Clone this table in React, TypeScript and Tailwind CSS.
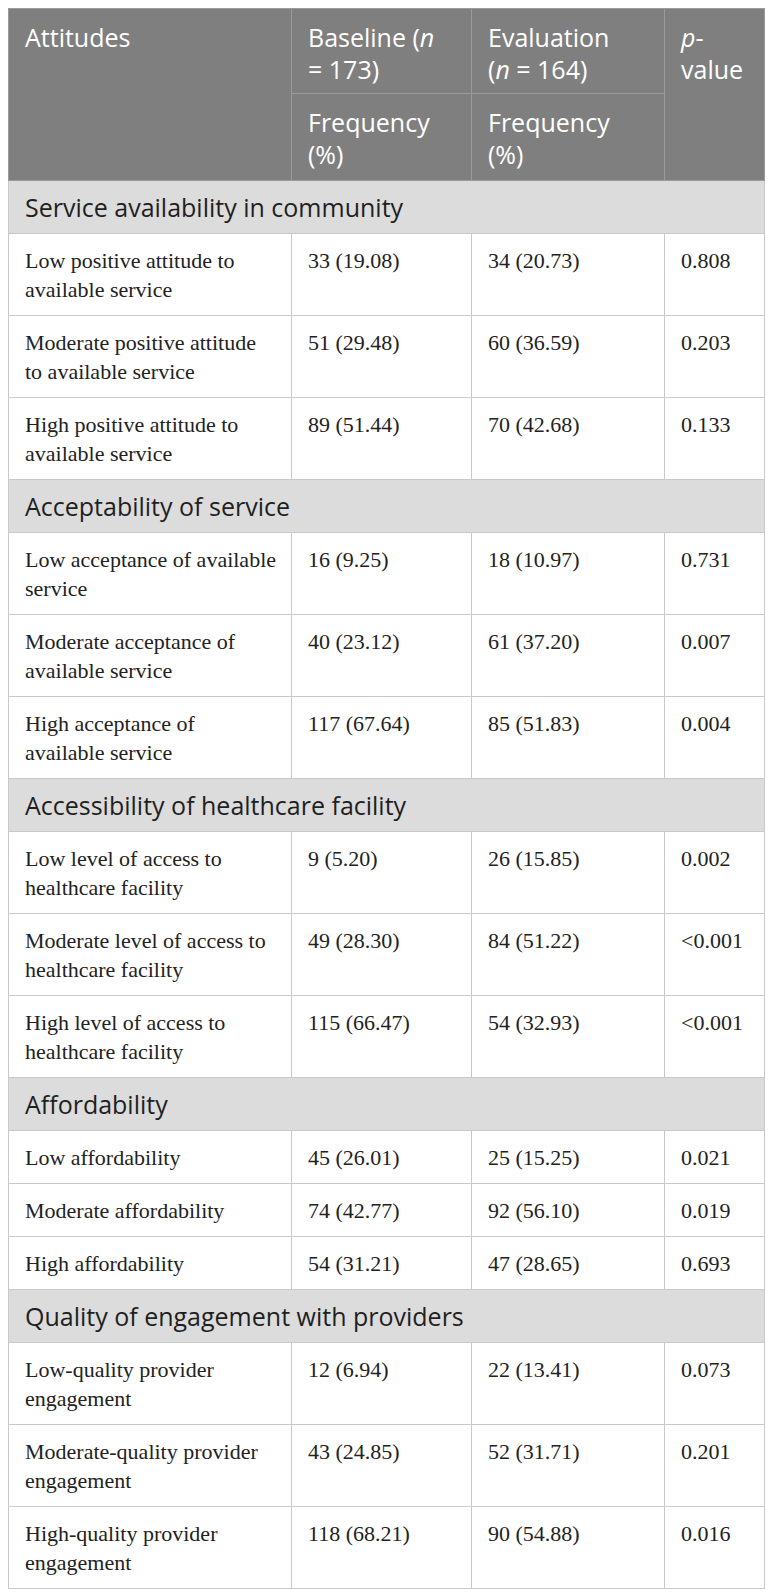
import React from 'react';

type Row = { label: string[]; base: string; evalv: string; p: string };
type Section = { title: string; rows: Row[] };

const sections: Section[] = [
  {
    title: 'Service availability in community',
    rows: [
      { label: ['Low positive attitude to', 'available service'], base: '33 (19.08)', evalv: '34 (20.73)', p: '0.808' },
      { label: ['Moderate positive attitude', 'to available service'], base: '51 (29.48)', evalv: '60 (36.59)', p: '0.203' },
      { label: ['High positive attitude to', 'available service'], base: '89 (51.44)', evalv: '70 (42.68)', p: '0.133' },
    ],
  },
  {
    title: 'Acceptability of service',
    rows: [
      { label: ['Low acceptance of available', 'service'], base: '16 (9.25)', evalv: '18 (10.97)', p: '0.731' },
      { label: ['Moderate acceptance of', 'available service'], base: '40 (23.12)', evalv: '61 (37.20)', p: '0.007' },
      { label: ['High acceptance of', 'available service'], base: '117 (67.64)', evalv: '85 (51.83)', p: '0.004' },
    ],
  },
  {
    title: 'Accessibility of healthcare facility',
    rows: [
      { label: ['Low level of access to', 'healthcare facility'], base: '9 (5.20)', evalv: '26 (15.85)', p: '0.002' },
      { label: ['Moderate level of access to', 'healthcare facility'], base: '49 (28.30)', evalv: '84 (51.22)', p: '<0.001' },
      { label: ['High level of access to', 'healthcare facility'], base: '115 (66.47)', evalv: '54 (32.93)', p: '<0.001' },
    ],
  },
  {
    title: 'Affordability',
    rows: [
      { label: ['Low affordability'], base: '45 (26.01)', evalv: '25 (15.25)', p: '0.021' },
      { label: ['Moderate affordability'], base: '74 (42.77)', evalv: '92 (56.10)', p: '0.019' },
      { label: ['High affordability'], base: '54 (31.21)', evalv: '47 (28.65)', p: '0.693' },
    ],
  },
  {
    title: 'Quality of engagement with providers',
    rows: [
      { label: ['Low-quality provider', 'engagement'], base: '12 (6.94)', evalv: '22 (13.41)', p: '0.073' },
      { label: ['Moderate-quality provider', 'engagement'], base: '43 (24.85)', evalv: '52 (31.71)', p: '0.201' },
      { label: ['High-quality provider', 'engagement'], base: '118 (68.21)', evalv: '90 (54.88)', p: '0.016' },
    ],
  },
];

const sans = "font-['Open_Sans','Liberation_Sans',sans-serif]";
const serif = "font-['Liberation_Serif','DejaVu_Serif',serif]";

export default function App() {
  return (
    <div className="min-h-screen bg-white p-2">
      <table className="w-[756px] table-fixed border-collapse border border-[#c9c9c9]">
        <colgroup>
          <col className="w-[283px]" />
          <col className="w-[180px]" />
          <col className="w-[193px]" />
          <col className="w-[100px]" />
        </colgroup>
        <thead className={`${sans} bg-[#7f7f7f] text-left align-top text-[25px] leading-[32px] text-white`}>
          <tr>
            <th rowSpan={2} className="border border-[#9b9b9b] px-4 pt-3 pb-2 font-normal">
              Attitudes
            </th>
            <th className="border border-[#9b9b9b] px-4 pt-3 pb-2 font-normal">
              Baseline (<i>n</i>
              <br />= 173)
            </th>
            <th className="border border-[#9b9b9b] px-4 pt-3 pb-2 font-normal">
              Evaluation
              <br />(<i>n</i> = 164)
            </th>
            <th rowSpan={2} className="border border-[#9b9b9b] px-4 pt-3 pb-2 font-normal">
              <i>p</i>-
              <br />value
            </th>
          </tr>
          <tr>
            <th className="border border-[#9b9b9b] px-4 pt-3 pb-[10px] font-normal">
              Frequency
              <br />(%)
            </th>
            <th className="border border-[#9b9b9b] px-4 pt-3 pb-[10px] font-normal">
              Frequency
              <br />(%)
            </th>
          </tr>
        </thead>
        <tbody>
          {sections.map((section) => (
            <React.Fragment key={section.title}>
              <tr className="bg-[#dcdcdc]">
                <td colSpan={4} className={`${sans} border border-[#c9c9c9] px-4 py-[10px] text-[25px] leading-[32px] text-[#1f1f1f]`}>
                  {section.title}
                </td>
              </tr>
              {section.rows.map((row) => (
                <tr key={row.label.join(' ')} className={`${serif} align-top text-[22px] leading-[29px] text-[#222]`}>
                  <td className="border border-[#c9c9c9] px-4 pt-3 pb-[11px]">
                    {row.label.map((line, i) => (
                      <div key={i} className="whitespace-nowrap">
                        {line}
                      </div>
                    ))}
                  </td>
                  <td className="border border-[#c9c9c9] px-4 pt-3 pb-[11px]">{row.base}</td>
                  <td className="border border-[#c9c9c9] px-4 pt-3 pb-[11px]">{row.evalv}</td>
                  <td className="border border-[#c9c9c9] px-4 pt-3 pb-[11px]">{row.p}</td>
                </tr>
              ))}
            </React.Fragment>
          ))}
        </tbody>
      </table>
    </div>
  );
}
